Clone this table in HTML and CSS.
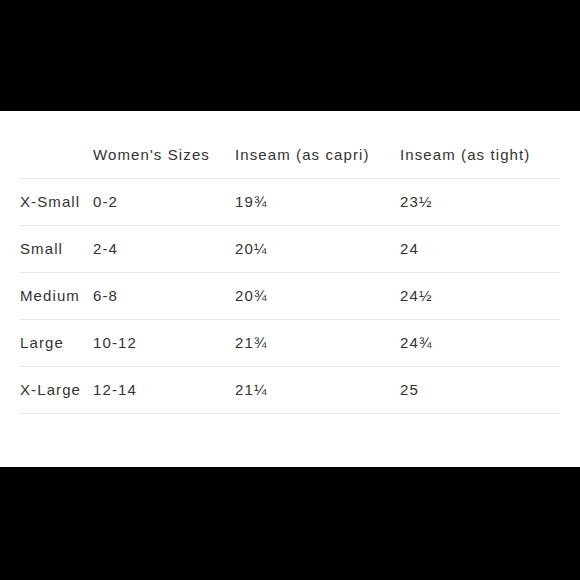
FILE: index.html
```html
<!DOCTYPE html>
<html>
<head>
<meta charset="utf-8">
<link rel="stylesheet" href="styles.css">
</head>
<body>
<div class="band"></div>
<section class="sheet">
  <table class="sizes">
    <colgroup>
      <col class="c1"><col class="c2"><col class="c3"><col class="c4">
    </colgroup>
    <thead>
      <tr><th></th><th>Women's Sizes</th><th>Inseam (as capri)</th><th>Inseam (as tight)</th></tr>
    </thead>
    <tbody>
      <tr><td>X-Small</td><td>0-2</td><td>19¾</td><td>23½</td></tr>
      <tr><td>Small</td><td>2-4</td><td>20¼</td><td>24</td></tr>
      <tr><td>Medium</td><td>6-8</td><td>20¾</td><td>24½</td></tr>
      <tr><td>Large</td><td>10-12</td><td>21¾</td><td>24¾</td></tr>
      <tr><td>X-Large</td><td>12-14</td><td>21¼</td><td>25</td></tr>
    </tbody>
  </table>
</section>
<div class="band bottom"></div>
</body>
</html>
```
FILE: styles.css
```css
html, body {
  margin: 0;
  padding: 0;
  background: #000;
}
.band {
  height: 111px;
  background: #000;
}
.band.bottom {
  height: 113px;
}
.sheet {
  background: #fff;
  height: 356px;
  box-sizing: border-box;
  padding: 21px 20px 0 20px;
}
.sizes {
  border-collapse: collapse;
  table-layout: fixed;
  width: 540px;
  font-family: "Liberation Sans", Arial, sans-serif;
  font-size: 15px;
  letter-spacing: 1.1px;
  color: #333;
}
.c1 { width: 73px; }
.c2 { width: 142px; }
.c3 { width: 165px; }
.c4 { width: 160px; }
.sizes th, .sizes td {
  padding: 0 0 2px 0;
  height: 44px;
  text-align: left;
  font-weight: normal;
  border-bottom: 1px solid #e6e6e6;
  white-space: nowrap;
  vertical-align: middle;
}
```
